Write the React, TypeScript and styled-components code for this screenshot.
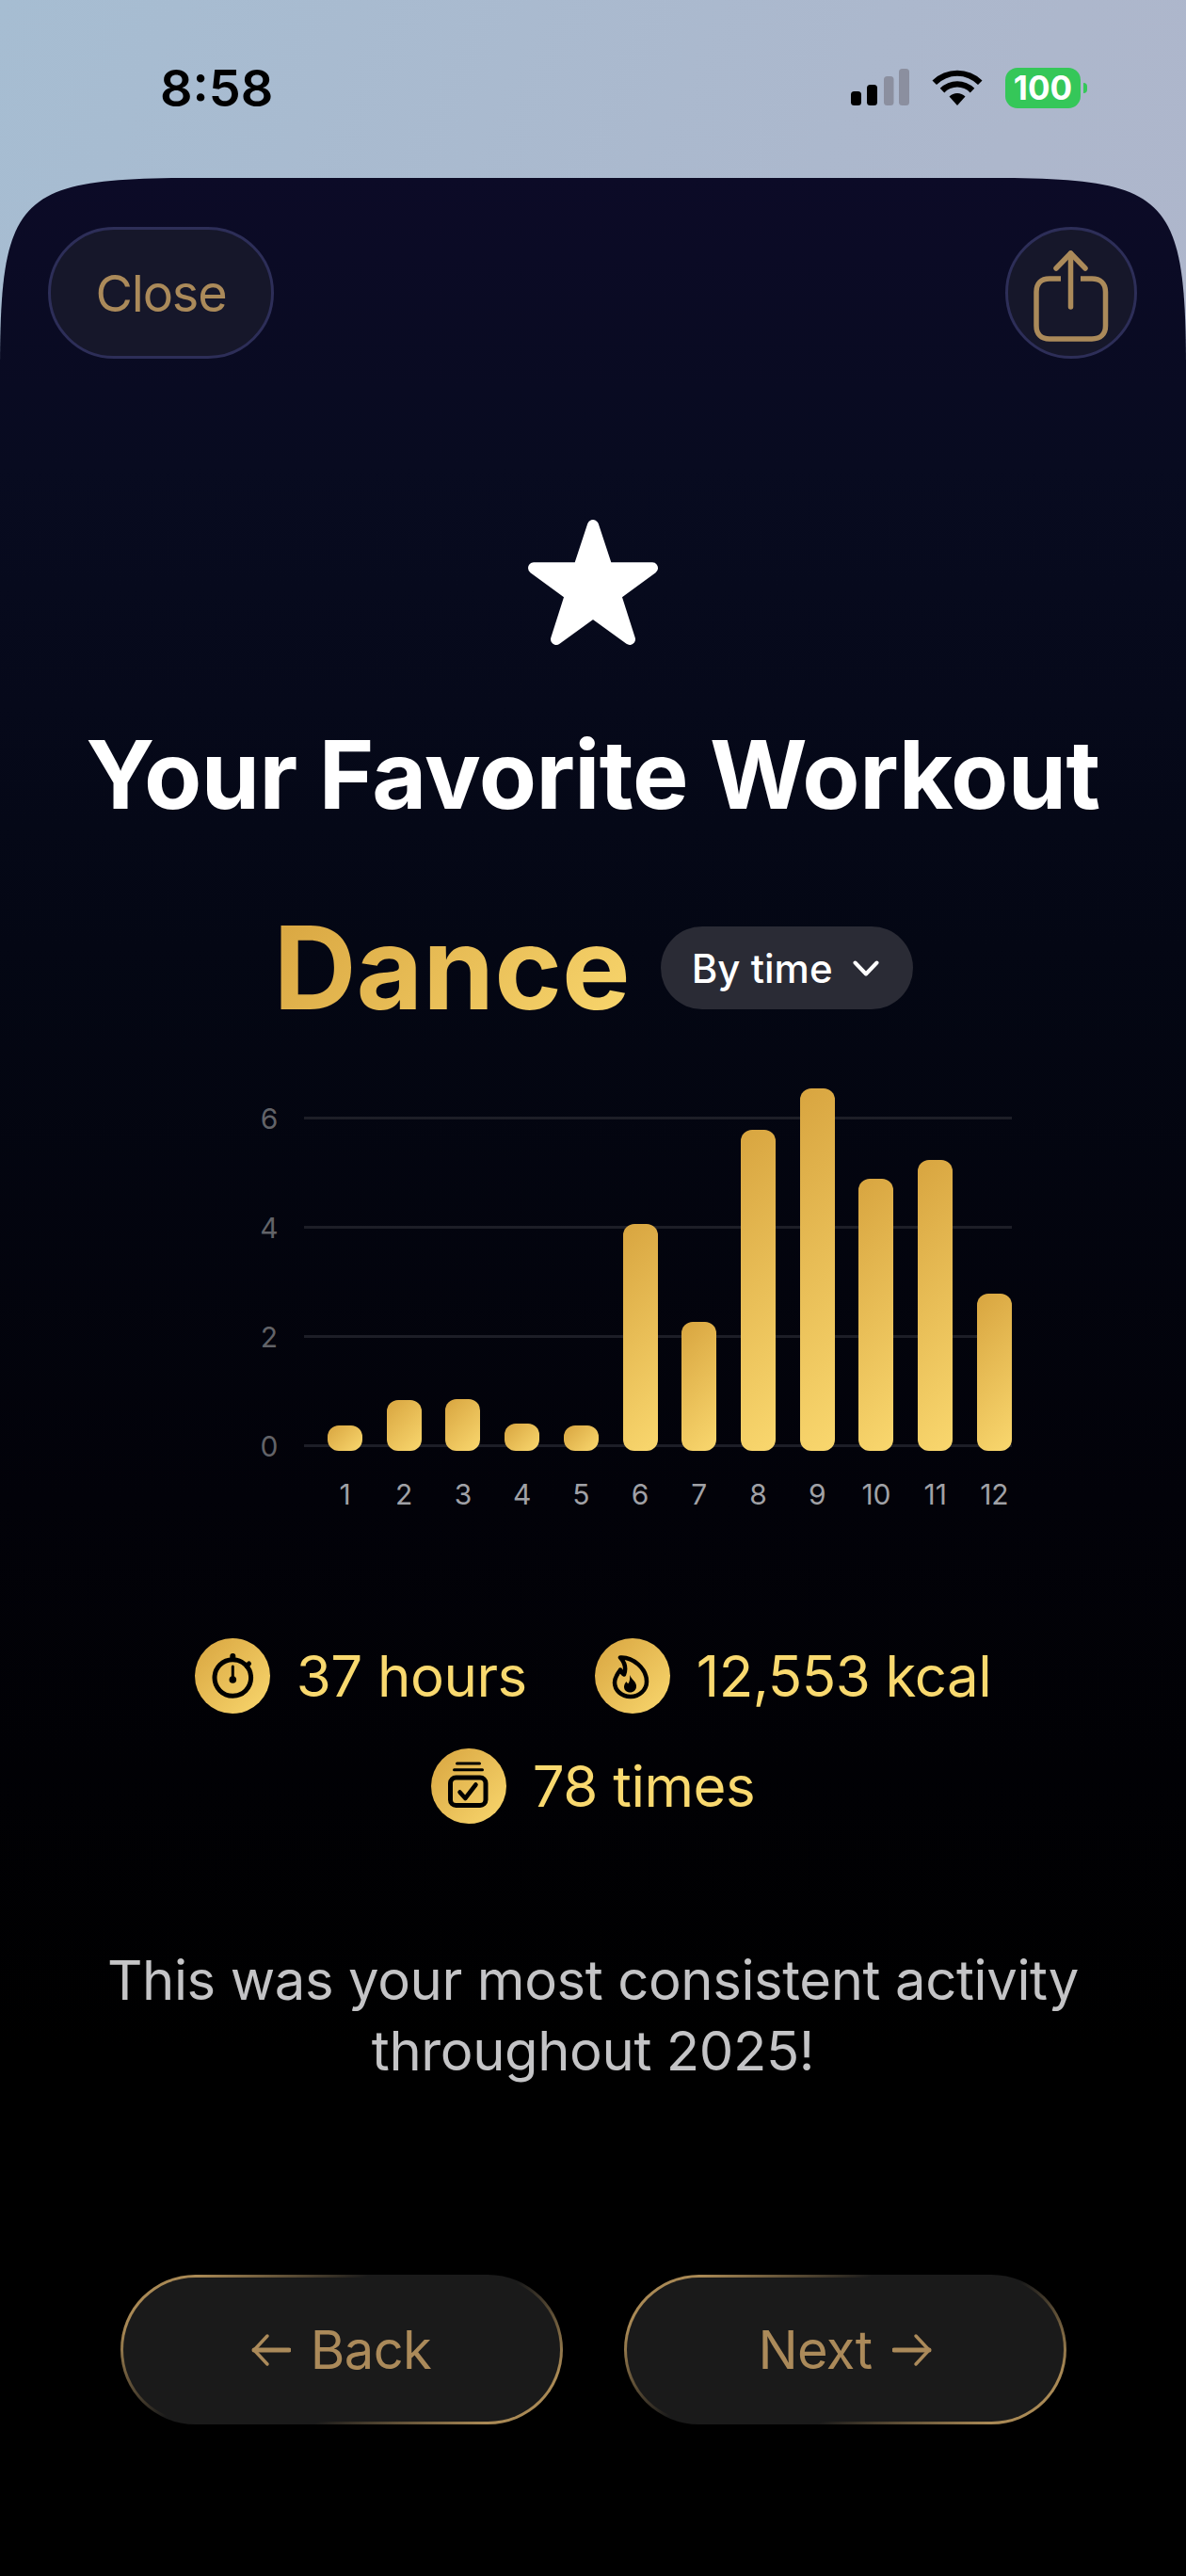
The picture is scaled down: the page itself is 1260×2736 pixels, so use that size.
import styled, { createGlobalStyle } from 'styled-components';

const GlobalStyle = createGlobalStyle`
    html,
    body {
        margin: 0;
        padding: 0;
        background: #000;
    }

    * {
        box-sizing: border-box;
    }
`;

const gold = 'linear-gradient(135deg, #d8a540 0%, #f9d76e 100%)';

const monthlyHours = [
    0.47, 0.93, 0.95, 0.5, 0.47, 4.16, 2.36, 5.88, 6.64, 4.98, 5.33, 2.88
];
const pxPerHour = 58;
const baselineOffset = 4;

const Page = styled.div`
    width: 1260px;
    height: 2736px;
    overflow: hidden;
    display: flex;
    flex-direction: column;
    background: linear-gradient(115deg, #a6bdd2 0%, #adb7cc 45%, #b2b3ca 100%);
    font-family: Inter, 'Liberation Sans', sans-serif;
`;

const StatusBar = styled.div`
    height: 189px;
    flex-shrink: 0;
    display: flex;
    align-items: flex-start;
    justify-content: space-between;
    padding: 72px 112px 0 170px;
`;

const Clock = styled.div`
    font-size: 54px;
    line-height: 44px;
    font-weight: 600;
    color: #000;
`;

const StatusIcons = styled.div`
    display: flex;
    align-items: flex-start;
    gap: 24px;
    padding-top: 1px;
`;

const Battery = styled.div`
    position: relative;
    width: 80px;
    height: 43px;
    margin-top: -1px;
    border-radius: 13px;
    background: #35c759;
    color: #fff;
    font-size: 35px;
    line-height: 43px;
    font-weight: 700;
    text-align: center;

    &::after {
        content: '';
        position: absolute;
        left: 83px;
        top: 16px;
        width: 4px;
        height: 11px;
        border-radius: 0 6px 6px 0;
        background: #35c759;
    }
`;

// continuous-curve top corners, which border-radius can't do
const Sheet = styled.div`
    flex: 1;
    display: flex;
    flex-direction: column;
    align-items: center;
    padding-top: 52px;
    clip-path: path(
        'M0 2547V205C0 19 19 0 205 0H1055C1241 0 1260 19 1260 205V2547Z'
    );
    background: linear-gradient(
        180deg,
        #0c0b27 0%,
        #080b20 12%,
        #040714 32%,
        #020209 55%,
        #000 78%
    );
`;

const Toolbar = styled.div`
    width: 100%;
    display: flex;
    justify-content: space-between;
    padding: 0 52px 0 51px;
`;

const GlassButton = styled.button`
    height: 140px;
    padding: 0;
    display: flex;
    align-items: center;
    justify-content: center;
    background: #16172a;
    border: 3px solid #2d2e58;
    color: #ab8a5a;
    font-family: inherit;
    font-size: 54px;
    letter-spacing: -1.2px;
`;

const CloseButton = styled(GlassButton)`
    width: 240px;
    border-radius: 70px;
`;

const ShareButton = styled(GlassButton)`
    width: 140px;
    border-radius: 50%;
`;

const StarMark = styled.svg`
    width: 140px;
    height: 140px;
    margin-top: 170px;
    display: block;
`;

const Title = styled.h1`
    margin: 77px 0 0;
    font-size: 100px;
    line-height: 110px;
    font-weight: 700;
    letter-spacing: -0.55px;
    color: #fff;
    white-space: nowrap;
`;

const ActivityRow = styled.div`
    margin-top: 106px;
    height: 88px;
    display: flex;
    align-items: center;
    gap: 32px;
`;

const ActivityName = styled.div`
    font-size: 122px;
    line-height: 88px;
    font-weight: 700;
    background: ${gold};
    background-clip: text;
    -webkit-background-clip: text;
    color: transparent;
    padding: 24px 0;
`;

const SortPill = styled.div`
    height: 88px;
    display: flex;
    align-items: center;
    gap: 21px;
    padding: 0 36px 0 33px;
    border-radius: 44px;
    background: #2a2b35;
    color: #fff;
    font-size: 42px;
    font-weight: 500;
`;

const Chart = styled.div`
    width: 752px;
    margin: 78px 0 0 138px;
`;

const Plot = styled.div`
    position: relative;
    height: 391px;
    display: flex;
    align-items: flex-end;
    justify-content: space-between;
    padding-left: 25px;
`;

const GridLine = styled.div<{ $hours: number }>`
    position: absolute;
    left: 0;
    right: 0;
    bottom: ${({ $hours }) => $hours * pxPerHour + baselineOffset}px;
    height: 3px;
    background: #1d1e27;
`;

const YLabel = styled.span`
    position: absolute;
    left: -52px;
    top: -16px;
    width: 30px;
    text-align: center;
    font-size: 30px;
    line-height: 36px;
    color: #626368;
`;

const Bar = styled.div`
    position: relative;
    width: 37px;
    border-radius: 12px;
    background: ${gold};
`;

const XAxis = styled.div`
    display: flex;
    justify-content: space-between;
    padding-left: 25px;
    margin-top: 28px;
`;

const XLabel = styled.div`
    width: 37px;
    display: flex;
    justify-content: center;
    font-size: 30px;
    line-height: 36px;
    color: #a0a1a6;
`;

const Stats = styled.div`
    margin-top: 135px;
    display: flex;
    flex-direction: column;
    align-items: center;
    gap: 37px;
`;

const StatRow = styled.div`
    display: flex;
    gap: 72px;
`;

const Stat = styled.div`
    display: flex;
    align-items: center;
    gap: 28px;
    font-size: 60px;
    line-height: 80px;
    letter-spacing: -0.5px;
    color: #f9d96f;
`;

const StatBadge = styled.svg`
    width: 80px;
    height: 80px;
    display: block;
    border-radius: 50%;
    background: ${gold};
`;

const Blurb = styled.p`
    margin: 129px 0 0;
    font-size: 58px;
    line-height: 75px;
    letter-spacing: -0.4px;
    text-align: center;
    color: #c4c4c6;
`;

const NavRow = styled.div`
    margin-top: 200px;
    display: flex;
    gap: 65px;
`;

const NavButton = styled.button`
    width: 470px;
    height: 159px;
    padding: 0;
    display: flex;
    align-items: center;
    justify-content: center;
    gap: 21px;
    border: 3px solid transparent;
    border-radius: 80px;
    background:
        linear-gradient(#1a1a1a, #1a1a1a) padding-box,
        linear-gradient(
                145deg,
                #a98955 0%,
                #a98955 12%,
                #1a1a1a 38%,
                #1a1a1a 62%,
                #a98955 88%,
                #a98955 100%
            )
            border-box;
    color: #ab8a5a;
    font-family: inherit;
    font-size: 56px;
    letter-spacing: -0.6px;
`;

const ShareIcon = () => (
    <svg width="84" height="104" viewBox="0 0 84 104" fill="none" stroke="#ab8a5a" strokeWidth="5.5" strokeLinecap="round" strokeLinejoin="round">
        <path d="M31 37H19C10 37 5 42 5 51V87C5 96 10 101 19 101H64C73 101 78.5 96 78.5 87V51C78.5 42 73 37 64 37H52" strokeLinecap="butt" />
        <path d="M41.5 67V10" />
        <path d="M26 26L41.5 10L57 26" />
    </svg>
);

const SignalIcon = () => (
    <svg width="62" height="39" viewBox="0 0 62 39">
        <rect x="0" y="24" width="11" height="15" rx="3.5" fill="#000" />
        <rect x="17" y="17" width="11" height="22" rx="3.5" fill="#000" />
        <rect x="35" y="8" width="10.5" height="31" rx="3.5" fill="#8b8f9f" />
        <rect x="51" y="0" width="11" height="39" rx="3.5" fill="#8b8f9f" />
    </svg>
);

const WifiIcon = () => (
    <svg width="54" height="40" viewBox="0 0 54 40" fill="#000">
        <path d="M0.5 12.5A38 38 0 0 1 53.5 12.5L49 17A31 31 0 0 0 5 17Z" />
        <path d="M8.7 20.8A26 26 0 0 1 45.3 20.8L40.7 25.4A19 19 0 0 0 13.3 25.4Z" />
        <path d="M18.5 29.5A12 12 0 0 1 35.5 29.5L27 39Z" />
    </svg>
);

const ChevronIcon = () => (
    <svg width="28" height="17" viewBox="0 0 28 17" fill="none" stroke="#fff" strokeWidth="4" strokeLinecap="round" strokeLinejoin="round">
        <path d="M2.5 2.5L14 14.5L25.5 2.5" />
    </svg>
);

const ArrowIcon = ({ flip = false }: { flip?: boolean }) => (
    <svg width="42" height="36" viewBox="0 0 42 36" fill="none" stroke="#ab8a5a" strokeLinecap="round" strokeLinejoin="round" transform={flip ? 'scale(-1 1)' : undefined}>
        <path d="M3 18H40" strokeWidth="5" />
        <path d="M17 3L3 18L17 33" strokeWidth="3.5" />
    </svg>
);

const StopwatchBadge = () => (
    <StatBadge viewBox="0 0 80 80">
        <g fill="none" stroke="#000" strokeWidth="5" strokeLinecap="round">
            <circle cx="40.3" cy="42" r="19.3" />
            <path d="M40.3 19V21" strokeWidth="6" />
            <path d="M57.5 27L55 29.5" strokeWidth="5" />
            <path d="M40.3 30V42" strokeWidth="3" />
        </g>
        <circle cx="40.3" cy="44" r="3.8" fill="#000" />
    </StatBadge>
);

const FlameBadge = () => (
    <StatBadge viewBox="0 0 80 80">
        <path
            d="M27 20.5C40 19.5 55 32 55 46C55 55 47 62 38 62C28 62 21 55 21 47C21 41 25 37 27 33.5C28.5 36.5 30 38 31 38.5C33 33 32 26 27 20.5Z"
            fill="none"
            stroke="#000"
            strokeWidth="4.5"
            strokeLinejoin="round"
        />
        <path
            d="M37 39C39 44 44 46 44 51C44 55 41 57.5 37.5 57.5C33.5 57.5 31 55 31 51.5C31 49 32.5 47 33.5 46C34 47.5 35 48 35.5 48C37 46 37.5 42 37 39Z"
            fill="#000"
        />
    </StatBadge>
);

const JarBadge = () => (
    <StatBadge viewBox="0 0 80 80">
        <g fill="none" stroke="#000" strokeLinecap="round" strokeLinejoin="round">
            <path d="M27.5 16H51.5" strokeWidth="3" />
            <path d="M24.5 22.7H54.5" strokeWidth="3" />
            <rect x="20.5" y="31" width="37.5" height="29.5" rx="6" strokeWidth="5" />
            <path d="M30.5 46.5L36.3 53L47.5 38.5" strokeWidth="4.5" />
        </g>
    </StatBadge>
);

export default function App() {
    return (
        <Page>
            <GlobalStyle />
            <StatusBar>
                <Clock>8:58</Clock>
                <StatusIcons>
                    <SignalIcon />
                    <WifiIcon />
                    <Battery>100</Battery>
                </StatusIcons>
            </StatusBar>
            <Sheet>
                <Toolbar>
                    <CloseButton>Close</CloseButton>
                    <ShareButton>
                        <ShareIcon />
                    </ShareButton>
                </Toolbar>
                <StarMark viewBox="0 0 140 140">
                    <polygon
                        points="70,7 55,52.3 7,52.3 46,81 31,128 70,99.6 109,128 94,81 133,52.3 85,52.3"
                        fill="#fff"
                        stroke="#fff"
                        strokeWidth="12"
                        strokeLinejoin="round"
                    />
                </StarMark>
                <Title>Your Favorite Workout</Title>
                <ActivityRow>
                    <ActivityName>Dance</ActivityName>
                    <SortPill>
                        By time
                        <ChevronIcon />
                    </SortPill>
                </ActivityRow>
                <Chart>
                    <Plot>
                        {[0, 2, 4, 6].map((hours) => (
                            <GridLine key={hours} $hours={hours}>
                                <YLabel>{hours}</YLabel>
                            </GridLine>
                        ))}
                        {monthlyHours.map((hours, month) => (
                            <Bar
                                key={month}
                                style={{ height: hours * pxPerHour }}
                            />
                        ))}
                    </Plot>
                    <XAxis>
                        {monthlyHours.map((_, month) => (
                            <XLabel key={month}>{month + 1}</XLabel>
                        ))}
                    </XAxis>
                </Chart>
                <Stats>
                    <StatRow>
                        <Stat>
                            <StopwatchBadge />
                            37 hours
                        </Stat>
                        <Stat>
                            <FlameBadge />
                            12,553 kcal
                        </Stat>
                    </StatRow>
                    <StatRow>
                        <Stat>
                            <JarBadge />
                            78 times
                        </Stat>
                    </StatRow>
                </Stats>
                <Blurb>
                    This was your most consistent activity
                    <br />
                    throughout 2025!
                </Blurb>
                <NavRow>
                    <NavButton>
                        <ArrowIcon />
                        Back
                    </NavButton>
                    <NavButton>
                        Next
                        <ArrowIcon flip />
                    </NavButton>
                </NavRow>
            </Sheet>
        </Page>
    );
}
